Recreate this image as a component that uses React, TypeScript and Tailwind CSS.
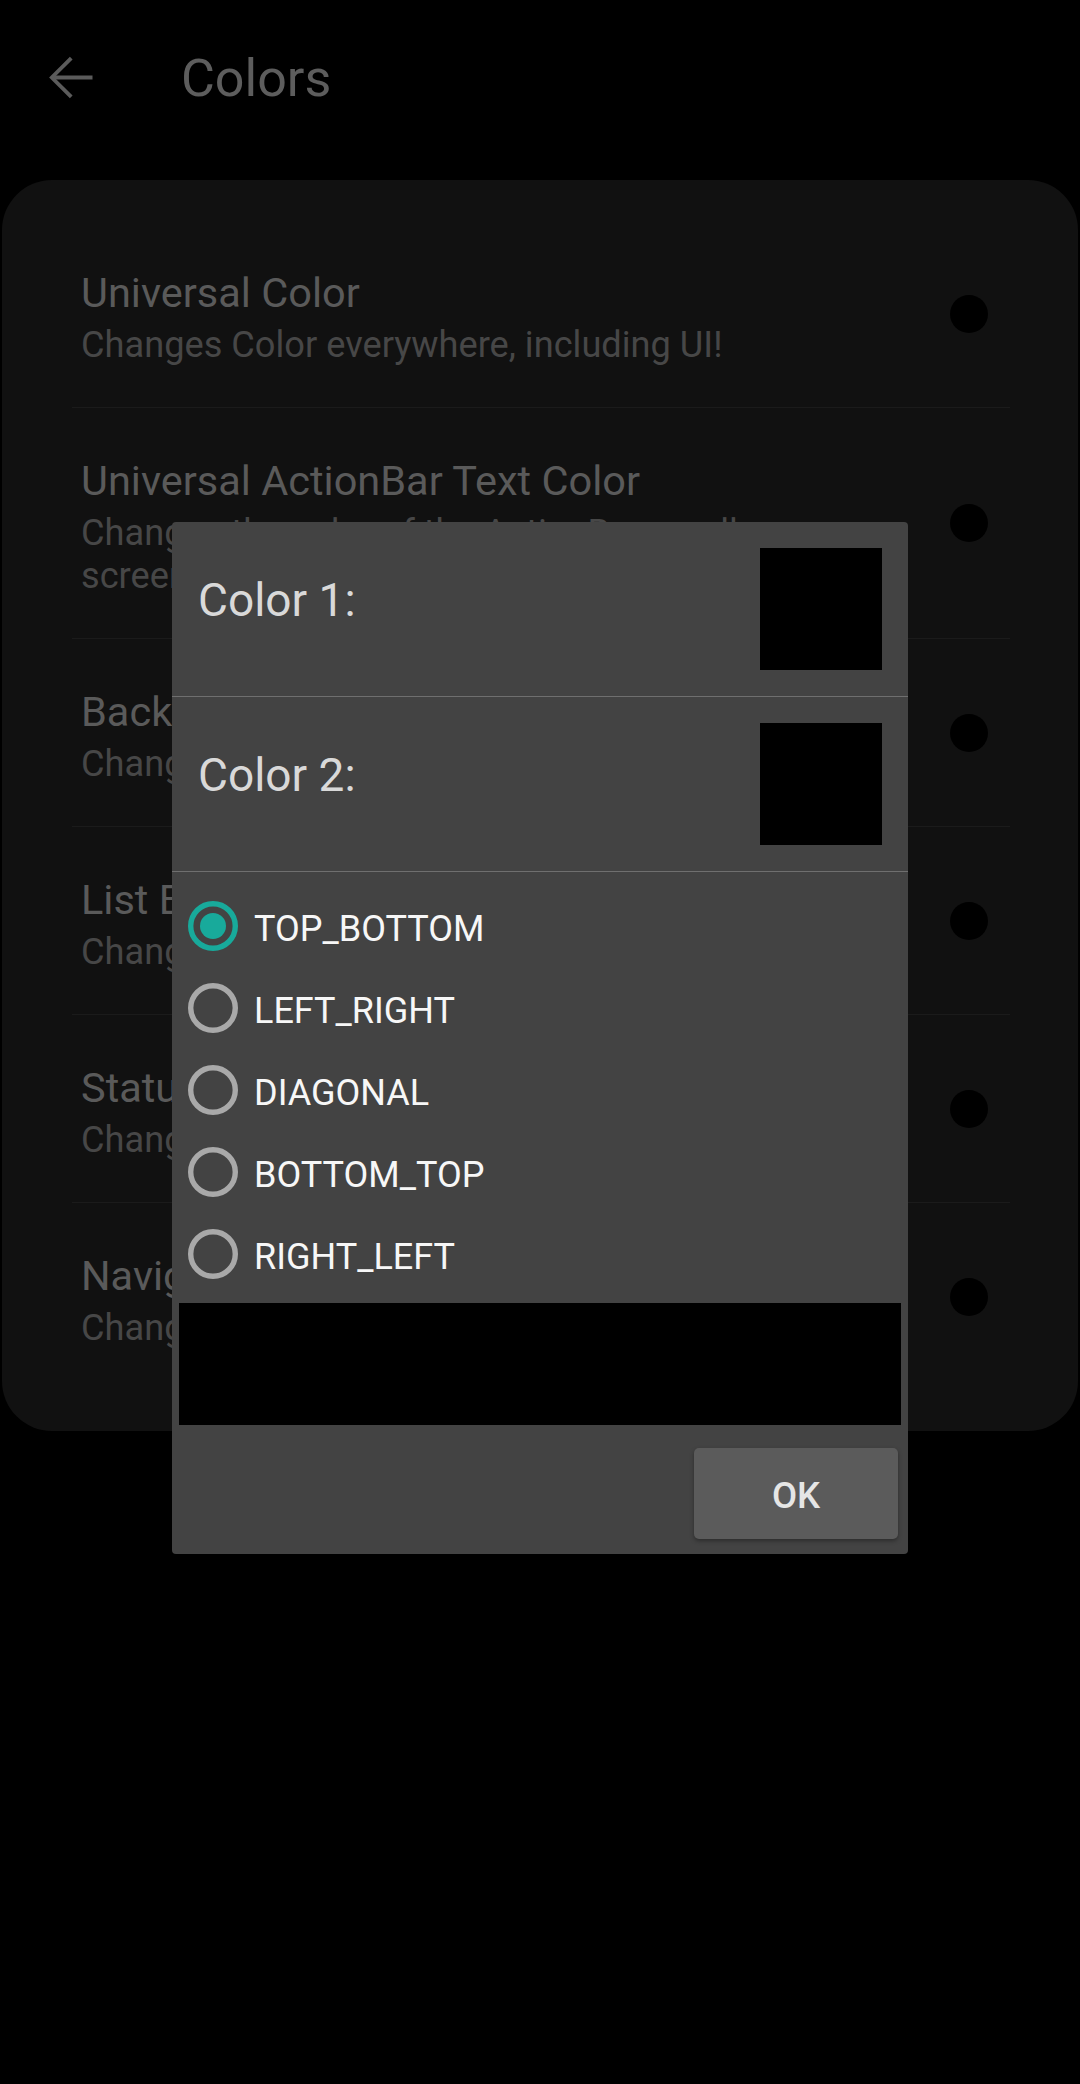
import React from "react";

type Item = { title: string; sub: React.ReactNode; last?: boolean };

const items: Item[] = [
  { title: "Universal Color", sub: "Changes Color everywhere, including UI!" },
  {
    title: "Universal ActionBar Text Color",
    sub: (
      <>
        Changes the color of the ActionBar on all
        <br />
        screens
      </>
    ),
  },
  { title: "Background Color", sub: "Changes the background color" },
  { title: "List Background Color", sub: "Changes the list background color" },
  { title: "Status Bar Color", sub: "Changes the status bar color" },
  { title: "Navigation Bar Color", sub: "Changes the navigation bar color", last: true },
];

const radios = ["TOP_BOTTOM", "LEFT_RIGHT", "DIAGONAL", "BOTTOM_TOP", "RIGHT_LEFT"];

function Radio({ checked }: { checked: boolean }) {
  const c = checked ? "#18aa9b" : "#a9a9a9";
  return (
    <svg width="50" height="50" viewBox="0 0 50 50" className="shrink-0">
      <circle cx="25" cy="25" r="22.3" fill="none" stroke={c} strokeWidth="5.4" />
      {checked && <circle cx="25" cy="25" r="13" fill={c} />}
    </svg>
  );
}

export default function App() {
  return (
    <div className="relative w-[1080px] h-[2084px] bg-black overflow-hidden font-['Roboto',sans-serif]">
      {/* Toolbar */}
      <div className="flex items-center h-[63px] mt-[46px] pl-[40px]">
        <svg width="63" height="63" viewBox="0 0 24 24" fill="none" stroke="#5b5b5b" strokeWidth="1.45" strokeLinecap="butt" strokeLinejoin="miter">
          <path d="M20 12H4.6" />
          <path d="M11.9 4.6L4.5 12l7.4 7.4" />
        </svg>
        <span className="ml-[78px] mt-[2px] text-[52px] leading-[61px] text-[#5d5d5d]">Colors</span>
      </div>

      {/* Card */}
      <div className="mx-[2px] mt-[71px] rounded-[50px] bg-[#111111] pt-[40px] pb-[40px]">
        {items.map((it, i) => (
          <div key={i}>
            <div className="flex items-center pl-[79px] pr-[90px]">
              <div className={`flex-1 pt-[48px] ${it.last ? "pb-[42px]" : "pb-[41px]"}`}>
                <div className="text-[41.5px] leading-[49px] text-[#5a5a5a]">{it.title}</div>
                <div className="mt-[6px] text-[36.2px] leading-[43px] text-[#474747]">{it.sub}</div>
              </div>
              <div className="w-[38px] h-[38px] rounded-full bg-black shrink-0" />
            </div>
            {!it.last && <div className="ml-[70px] mr-[68px] h-px bg-[#1b1b1b]" />}
          </div>
        ))}
      </div>

      {/* Dialog */}
      <div className="absolute left-[172px] top-[522px] w-[736px] bg-[#434343] rounded-[4px]">
        <div className="flex justify-between p-[26px]">
          <span className="mt-[25px] text-[46px] leading-[55px] text-[#d9d9d9]">Color 1:</span>
          <div className="w-[122px] h-[122px] bg-black" />
        </div>
        <div className="h-px bg-[#6f6f6f]" />
        <div className="flex justify-between p-[26px]">
          <span className="mt-[25px] text-[46px] leading-[55px] text-[#d9d9d9]">Color 2:</span>
          <div className="w-[122px] h-[122px] bg-black" />
        </div>
        <div className="h-px bg-[#6f6f6f]" />
        <div className="pt-[13px]">
          {radios.map((r, i) => (
            <div key={r} className="flex items-center h-[82px] pl-[16px] gap-[16px]">
              <Radio checked={i === 0} />
              <span className="mt-[5px] text-[36px] leading-none text-[#f7f7f7]">{r}</span>
            </div>
          ))}
        </div>
        <div className="mt-[8px] mx-[7px] h-[122px] bg-black" />
        <div className="flex justify-end pt-[23px] pb-[15px] pr-[10px]">
          <div className="flex items-center justify-center w-[204px] h-[91px] rounded-[5px] bg-[#5b5b5b] shadow-[0_2px_4px_rgba(0,0,0,0.35)]">
            <span className="mt-[6px] text-[36.5px] font-medium leading-none text-[#e6e6e6]">OK</span>
          </div>
        </div>
      </div>
    </div>
  );
}
